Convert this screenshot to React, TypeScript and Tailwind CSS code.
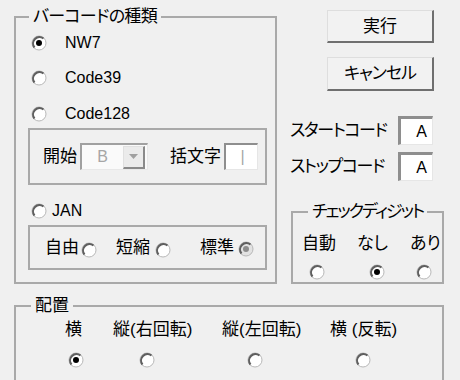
import React from 'react';

type RadioProps = { checked?: boolean; disabled?: boolean };

// Windows classic radio: white well, grey shade on the upper-left arc
function Radio({ checked = false, disabled = false }: RadioProps) {
    return (
        <svg width="16" height="16" viewBox="0 0 16 16" className="-m-[0.5px] shrink-0">
            <circle cx="8" cy="8" r="7" fill={disabled ? '#e2e2e2' : '#ffffff'} stroke="#b8b8b8" strokeWidth="1" />
            <path d="M3.5 12.5 A6.4 6.4 0 0 1 12.5 3.5" fill="none" stroke="#5f5f5f" strokeWidth="2.1" />
            {checked && <circle cx="8" cy="8" r="3" fill={disabled ? '#8c8c8c' : '#000000'} />}
        </svg>
    );
}

function PushButton({ label, className }: { label: string; className: string }) {
    return (
        <button
            className={`ml-[36px] flex w-[107px] items-center justify-center border-t border-l border-t-[#dedede] border-l-[#dedede] border-r-2 border-b-2 border-r-[#6f6f6f] border-b-[#6f6f6f] bg-[#f2f2f2] pt-[1px] ${className}`}
        >
            {label}
        </button>
    );
}

function CodeBox({ value }: { value: string }) {
    return (
        <div className="flex h-[29px] w-[35px] items-center justify-end border-t-[3px] border-l-[3px] border-t-[#8e8e8e] border-l-[#8e8e8e] border-r border-b border-r-[#e6e6e6] border-b-[#e6e6e6] bg-white pr-[5px] text-[16px]">
            {value}
        </div>
    );
}

export default function App() {
    return (
        <div className="h-[380px] w-[460px] overflow-hidden bg-[#f0f0f0] text-[17px] leading-[20px] text-black [font-family:'Liberation_Sans','Noto_Sans_CJK_JP',sans-serif] [font-feature-settings:'palt']">
            <div className="flex items-start">
                {/* ===== バーコードの種類 ===== */}
                <fieldset className="mt-[7px] ml-[14px] h-[277px] w-[263px] min-w-0 border-2 border-[#a9a9a9]">
                    <legend className="ml-[13px] px-[4px] leading-[20px] tracking-[-0.7px]">バーコードの種類</legend>

                    <div className="mt-[6px] flex h-[20px] items-center pl-[15px]">
                        <Radio checked />
                        <span className="ml-[19px] text-[16px]">NW7</span>
                    </div>
                    <div className="mt-[15px] flex h-[20px] items-center pl-[15px]">
                        <Radio />
                        <span className="ml-[19px] text-[16px]">Code39</span>
                    </div>
                    <div className="mt-[16px] flex h-[20px] items-center pl-[15px]">
                        <Radio />
                        <span className="ml-[19px] text-[16px]">Code128</span>
                    </div>

                    <div className="mt-[4px] ml-[12px] flex h-[57px] w-[239px] items-center border-2 border-[#a9a9a9] pl-[13px]">
                        <span>開始</span>
                        <div className="ml-[3px] flex h-[27px] w-[68px] items-center border-t-2 border-l-2 border-t-[#a0a0a0] border-l-[#a0a0a0] border-r border-b border-r-[#e8e8e8] border-b-[#e8e8e8] bg-[#fafafa]">
                            <span className="w-[41px] text-center text-[16px] text-[#a6a6a6]">B</span>
                            <div className="flex h-[23px] w-[22px] items-center justify-center border-t border-l border-t-[#e0e0e0] border-l-[#e0e0e0] border-r-2 border-b-2 border-r-[#8a8a8a] border-b-[#8a8a8a] bg-[#ebebeb]">
                                <svg width="9" height="5" viewBox="0 0 9 5">
                                    <path d="M0 0 H9 L4.5 5 Z" fill="#a0a0a0" />
                                </svg>
                            </div>
                        </div>
                        <span className="ml-[22px]">括文字</span>
                        <div className="ml-[3px] flex h-[27px] w-[34px] items-center justify-center border-t-2 border-l-2 border-t-[#8e8e8e] border-l-[#8e8e8e] border-r border-b border-r-[#e6e6e6] border-b-[#e6e6e6] bg-white pl-[2px] text-[16px] text-[#a6a6a6]">
                            |
                        </div>
                    </div>

                    <div className="mt-[16px] flex h-[20px] items-center pl-[15px]">
                        <Radio />
                        <span className="ml-[6px] text-[16px]">JAN</span>
                    </div>

                    <div className="mt-[4px] ml-[12px] flex h-[45px] w-[239px] items-center border-2 border-[#a9a9a9] pl-[15px]">
                        <span className="w-[36px]">自由</span>
                        <span className="mt-[4px]">
                            <Radio />
                        </span>
                        <span className="ml-[20px] w-[39px]">短縮</span>
                        <span className="mt-[4px]">
                            <Radio />
                        </span>
                        <span className="ml-[30px] w-[38px]">標準</span>
                        <span className="mt-[2px]">
                            <Radio checked disabled />
                        </span>
                    </div>
                </fieldset>

                {/* ===== Right column ===== */}
                <div className="ml-[14px] flex w-[153px] flex-col">
                    <PushButton label="実行" className="mt-[10px] h-[33px]" />
                    <PushButton label="キャンセル" className="mt-[14px] h-[34px] tracking-[-1px]" />

                    <div className="mt-[25px] flex items-center">
                        <span className="-ml-[1px] w-[108px] tracking-[-1.4px]">スタートコード</span>
                        <CodeBox value="A" />
                    </div>
                    <div className="mt-[7px] flex items-center">
                        <span className="-ml-[1px] w-[108px] tracking-[-1.4px]">ストップコード</span>
                        <CodeBox value="A" />
                    </div>

                    <fieldset className="mt-[21px] h-[82px] w-[153px] min-w-0 border-2 border-[#a9a9a9]">
                        <legend className="ml-[15px] px-[4px] leading-[20px] tracking-[-2px] whitespace-nowrap">
                            チェックディジット
                        </legend>
                        <div className="mt-[12px] flex h-[20px]">
                            <span className="ml-[9px] w-[55px]">自動</span>
                            <span className="w-[53px]">なし</span>
                            <span>あり</span>
                        </div>
                        <div className="mt-[10px] flex h-[15px]">
                            <span className="ml-[16px]">
                                <Radio />
                            </span>
                            <span className="ml-[45px]">
                                <Radio checked />
                            </span>
                            <span className="ml-[32px]">
                                <Radio />
                            </span>
                        </div>
                    </fieldset>
                </div>
            </div>

            {/* ===== 配置 ===== */}
            <fieldset className="mt-[12px] ml-[14px] h-[100px] w-[430px] min-w-0 border-2 border-[#a9a9a9]">
                <legend className="ml-[15px] px-[4px] leading-[20px]">配置</legend>
                <div className="mt-[4px] flex h-[20px]">
                    <span className="ml-[49px] w-[48px]">横</span>
                    <span className="w-[109px]">縦(右回転)</span>
                    <span className="w-[108px]">縦(左回転)</span>
                    <span>横 (反転)</span>
                </div>
                <div className="mt-[12px] flex h-[15px]">
                    <span className="ml-[52px]">
                        <Radio checked />
                    </span>
                    <span className="ml-[56px]">
                        <Radio />
                    </span>
                    <span className="ml-[93px]">
                        <Radio />
                    </span>
                    <span className="ml-[93px]">
                        <Radio />
                    </span>
                </div>
            </fieldset>
        </div>
    );
}
